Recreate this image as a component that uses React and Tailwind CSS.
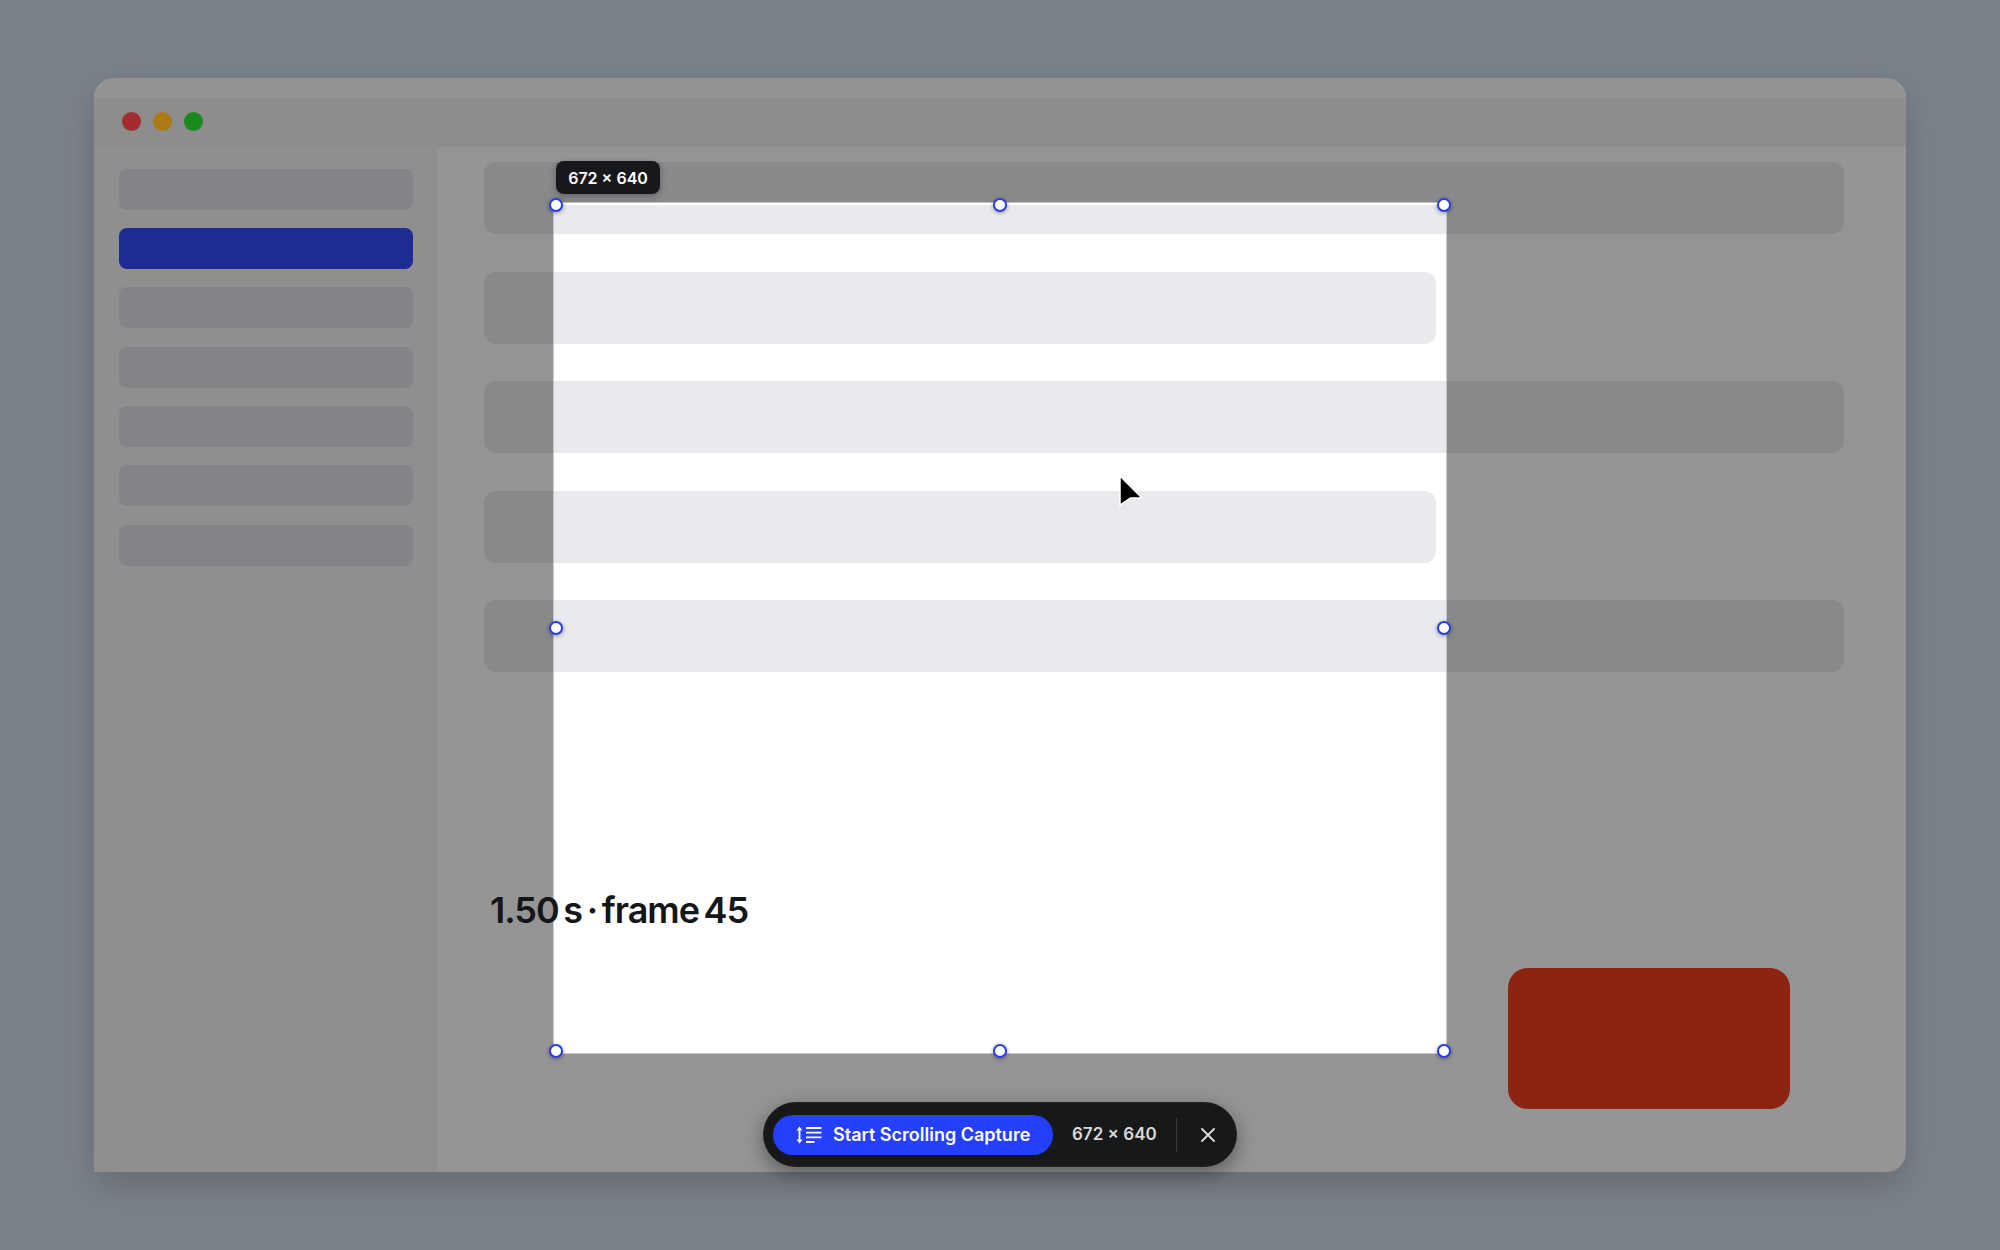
import React from 'react';
import { X } from 'lucide-react';

const SIDEBAR_ROWS = [0, 1, 2, 3, 4, 5, 6];
const CONTENT_ROWS = [0, 1, 2, 3, 4];

function Handle({ className }) {
  return (
    <span
      className={`absolute w-[14px] h-[14px] rounded-full bg-white border-2 border-[#2b3ce8] shadow-[0_1px_4px_rgba(0,0,0,0.4)] ${className}`}
    />
  );
}

function ScrollListIcon() {
  return (
    <svg width="26" height="18" viewBox="0 0 26 18" fill="none" className="shrink-0">
      <path d="M3.5 3v12" stroke="white" strokeWidth="1.8" />
      <path d="M3.5 0.5 6.5 4.5H0.5zM3.5 17.5 6.5 13.5H0.5z" fill="white" />
      <path d="M10 2h15.5M10 6.7h15.5M10 11.3h15.5M10 16h8.5" stroke="white" strokeWidth="1.8" />
    </svg>
  );
}

export default function App() {
  return (
    <div className="relative w-full h-screen overflow-hidden bg-[#7a828a] pl-[94px] pt-[78px] font-['Inter',sans-serif]">
      {/* Dimmed window */}
      <div className="w-[1812px] h-[1094px] rounded-[20px] rounded-bl-none overflow-hidden bg-[#959595] flex flex-col shadow-[0_14px_36px_rgba(20,0,10,0.18)]">
        <div className="h-[69px] shrink-0 bg-[#8d8d8d] border-t-[20px] border-[#939393]">
          <div className="flex items-center gap-[12px] pl-[28px] pt-[14px]">
            <span className="w-[19px] h-[19px] rounded-full bg-[#a32c2e]" />
            <span className="w-[19px] h-[19px] rounded-full bg-[#ac7a15]" />
            <span className="w-[19px] h-[19px] rounded-full bg-[#198a1e]" />
          </div>
        </div>

        <div className="flex flex-1 min-h-0">
          <div className="w-[343px] shrink-0 bg-[#8f8f8f] pt-[21.5px] pl-[25px] flex flex-col gap-[18.4px]">
            {SIDEBAR_ROWS.map((i) => (
              <div
                key={i}
                className={`w-[294px] h-[41px] rounded-[8px] ${i === 1 ? 'bg-[#1f2b94]' : 'bg-[#838487]'}`}
              />
            ))}
          </div>

          <div className="flex-1 pt-[15px] pl-[47px] pr-[62px] flex flex-col">
            <div className="flex flex-col gap-[37.6px]">
              {CONTENT_ROWS.map((i) => (
                <div
                  key={i}
                  className={`h-[72px] rounded-[12px] bg-[#88898b] ${i % 2 ? 'w-[952px]' : 'w-[1360px]'}`}
                />
              ))}
            </div>
            <div className="self-end w-[282px] h-[141px] rounded-[20px] bg-[#8c2414] mt-[296px] mr-[54px]" />
          </div>
        </div>
      </div>

      {/* Selected region */}
      <div className="absolute left-[554px] top-[203px] w-[892px] h-[850px] ring-1 ring-white/50">
        <div className="w-full h-full bg-white overflow-hidden border-t-2 border-white flex flex-col gap-[37.6px]">
          {CONTENT_ROWS.map((i) => (
            <div
              key={i}
              className={`h-[72px] shrink-0 rounded-[12px] bg-[#e9eaed] -ml-[70px] ${i === 0 ? '-mt-[43px]' : ''} ${i % 2 ? 'w-[952px]' : 'w-[1360px]'}`}
            />
          ))}
        </div>
        <Handle className="-left-[5px] -top-[5px]" />
        <Handle className="left-[439px] -top-[5px]" />
        <Handle className="-right-[5px] -top-[5px]" />
        <Handle className="-left-[5px] top-[418px]" />
        <Handle className="-right-[5px] top-[418px]" />
        <Handle className="-left-[5px] -bottom-[5px]" />
        <Handle className="left-[439px] -bottom-[5px]" />
        <Handle className="-right-[5px] -bottom-[5px]" />
        <div className="absolute left-[2px] -top-[42px] h-[33px] w-[104px] rounded-[8px] bg-[#17181b] flex items-center justify-center text-white text-[16px] font-semibold shadow-[0_2px_6px_rgba(0,0,0,0.3)]">
          672 × 640
        </div>
      </div>

      {/* Timestamp */}
      <div className="absolute left-[490px] top-[888px] text-[36px] leading-[44px] font-semibold tracking-[-1px] [word-spacing:-3.5px] text-[#14161a] whitespace-nowrap">
        1.50 s · frame 45
      </div>

      {/* Cursor */}
      <svg className="absolute left-[1115px] top-[470px]" width="34" height="42" viewBox="0 0 34 42">
        <path d="M5 6 27 28H15.5L5 35z" fill="black" stroke="white" strokeWidth="1.5" strokeLinejoin="miter" />
      </svg>

      {/* Toolbar */}
      <div className="absolute left-[763px] top-[1102px] w-[474px] h-[65px] rounded-full bg-[#17181a] border border-[#232325] flex items-center pl-[9px] shadow-[0_6px_20px_rgba(0,0,0,0.4)]">
        <button className="w-[280px] h-[40px] rounded-full bg-[#2540fc] flex items-center pl-[23px] gap-[11px] text-white text-[18px] font-semibold whitespace-nowrap">
          <ScrollListIcon />
          <span>Start Scrolling Capture</span>
        </button>
        <span className="ml-[19px] text-[#d8d8d8] text-[17px] font-semibold whitespace-nowrap">672 × 640</span>
        <span className="ml-[19px] w-px h-[34px] bg-[#3c3c3e]" />
        <X className="ml-[19px] w-[24px] h-[24px] text-[#d8d8d8]" strokeWidth={2} />
      </div>
    </div>
  );
}
